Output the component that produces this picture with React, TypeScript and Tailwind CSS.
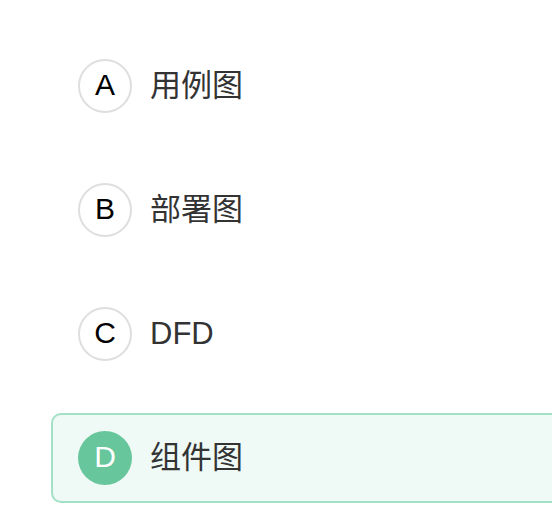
import React from 'react';

const options = [
  { key: 'A', label: '用例图' },
  { key: 'B', label: '部署图' },
  { key: 'C', label: 'DFD' },
  { key: 'D', label: '组件图' },
];

const selected = 'D';

export default function App() {
  return (
    <div
      className="w-[552px] h-[524px] overflow-hidden bg-white"
      style={{ fontFamily: '"Liberation Sans", "Noto Sans CJK SC", sans-serif' }}
    >
      <div className="flex flex-col gap-[34px] pt-[41px] pl-[51px]">
        {options.map((o) => {
          const on = o.key === selected;
          return (
            <div
              key={o.key}
              className={`flex items-center w-[560px] h-[90px] shrink-0 rounded-[10px] border-2 pl-[25px] ${
                on ? 'border-[#a2e1c6] bg-[#eff9f5]' : 'border-transparent'
              }`}
            >
              <div
                className={`flex items-center justify-center w-[54px] h-[54px] rounded-full text-[30px] leading-none pb-[2px] ${
                  on ? 'bg-[#67c69b] text-white' : 'border-2 border-[#dedede] text-black'
                }`}
              >
                {o.key}
              </div>
              <span className="ml-[18px] text-[31px] text-[#333333]">{o.label}</span>
            </div>
          );
        })}
      </div>
    </div>
  );
}
